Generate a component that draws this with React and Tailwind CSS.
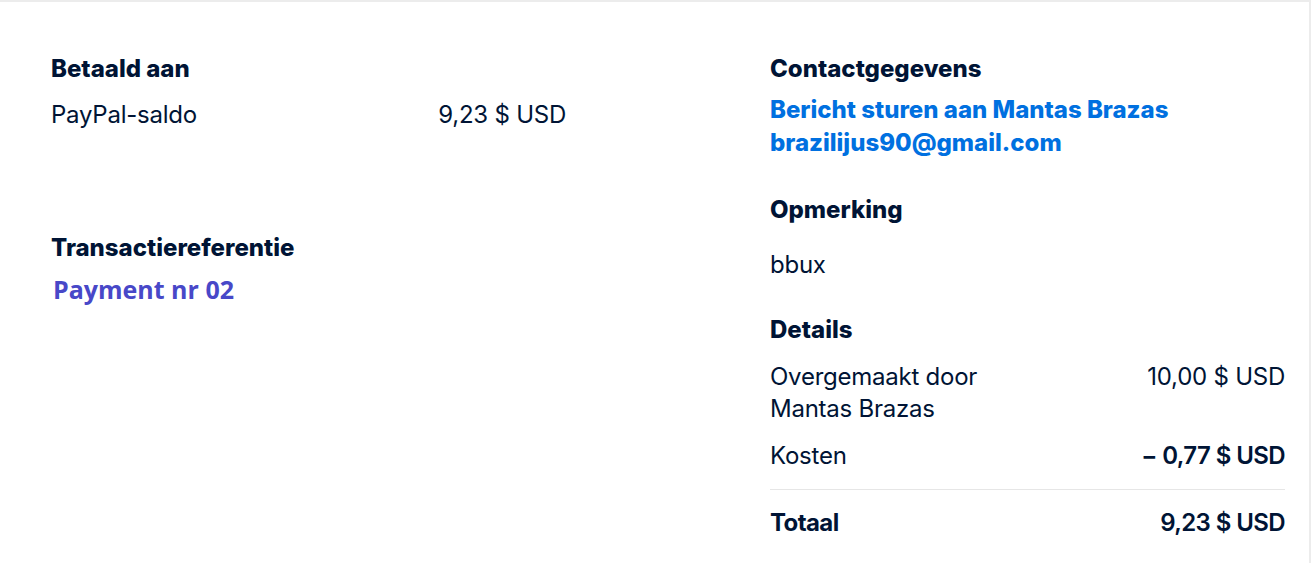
import React from 'react';

const heading = "text-[24px] leading-[28px] font-extrabold text-[#001435]";
const body = "text-[24px] leading-[32px] text-[#001435] tracking-[-0.01em]";

const App = () => {
  return (
    <div
      className="min-h-screen w-full bg-white border-t-2 border-r-2 border-[#ececec]"
      style={{ fontFamily: 'Inter, "Liberation Sans", sans-serif' }}
    >
      <div className="flex gap-[204px] pl-[51px] pt-[53px]">
        {/* Linkerkolom */}
        <div className="w-[515px]">
          <h3 className={heading}>Betaald aan</h3>
          <div className={`mt-[16px] flex justify-between ${body}`}>
            <span>PayPal-saldo</span>
            <span>9,23 $ USD</span>
          </div>

          <h3 className={`mt-[103px] ${heading}`}>Transactiereferentie</h3>
          <p
            className="mt-[11px] ml-[2px] text-[25px] leading-[32px] font-bold text-[#4848c8]"
            style={{ fontFamily: '"Open Sans", sans-serif' }}
          >
            Payment nr 02
          </p>
        </div>

        {/* Rechterkolom */}
        <div className="w-[515px]">
          <h3 className={heading}>Contactgegevens</h3>
          <div className="mt-[10px] flex flex-col text-[24px] leading-[33px] font-extrabold text-[#0070e0]">
            <a href="#">Bericht sturen aan Mantas Brazas</a>
            <a href="#">brazilijus90@gmail.com</a>
          </div>

          <h3 className={`mt-[37px] ${heading}`}>Opmerking</h3>
          <p className={`mt-[25px] ${body}`}>bbux</p>

          <h3 className={`mt-[35px] ${heading}`}>Details</h3>
          <div className={`mt-[17px] grid grid-cols-2 ${body}`}>
            <span>Overgemaakt door Mantas Brazas</span>
            <span className="text-right">10,00 $ USD</span>
          </div>
          <div className={`mt-[15px] flex justify-between ${body}`}>
            <span>Kosten</span>
            <span className="font-semibold tracking-tight">− 0,77 $ USD</span>
          </div>
          <div className="mt-[17px] border-t border-[#e6e6e6]" />
          <div className={`mt-[17px] flex justify-between ${body}`}>
            <span className="font-bold tracking-tight">Totaal</span>
            <span className="font-semibold tracking-tight">9,23 $ USD</span>
          </div>
        </div>
      </div>
    </div>
  );
};

export default App;
